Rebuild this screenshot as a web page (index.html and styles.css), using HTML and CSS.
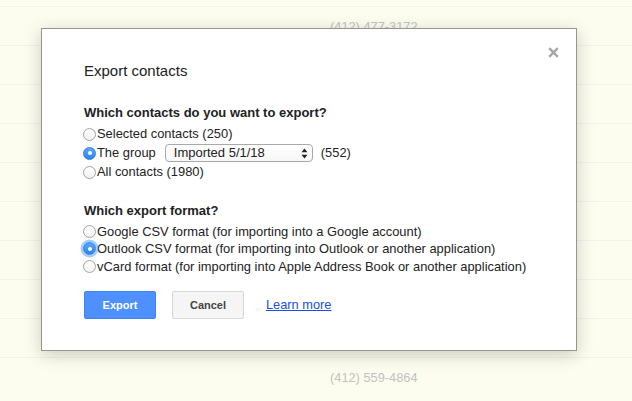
FILE: index.html
```html
<!DOCTYPE html>
<html>
<head>
<meta charset="utf-8">
<link rel="stylesheet" href="styles.css">
</head>
<body>
<div class="list">
  <div class="row"><span class="phone">(412) 477-3172</span></div>
  <div class="row"></div>
  <div class="row"></div>
  <div class="row"></div>
  <div class="row"></div>
  <div class="row"></div>
  <div class="row"></div>
  <div class="row"></div>
  <div class="row"></div>
  <div class="row"><span class="phone">(412) 559-4864</span></div>
</div>

<div class="dialog">
  <svg class="close" width="11" height="11" viewBox="0 0 11 11"><path d="M1.2 1.2L9.8 9.8M9.8 1.2L1.2 9.8" stroke="#a6a6a6" stroke-width="2.4" fill="none"/></svg>
  <div class="title">Export contacts</div>

  <div class="heading first">Which contacts do you want to export?</div>
  <div class="options wide">
    <label class="opt"><span class="radio"></span>Selected contacts (250)</label>
    <label class="opt"><span class="radio on"></span>The group
      <span class="select"><span class="select-text">Imported 5/1/18</span>
        <svg class="arrows" width="7" height="11" viewBox="0 0 7 11"><path d="M3.5 0.5L6.5 4.3H0.5Z M3.5 10.5L6.5 6.7H0.5Z" fill="#222"/></svg>
      </span>
      <span class="count">(552)</span>
    </label>
    <label class="opt"><span class="radio"></span>All contacts (1980)</label>
  </div>

  <div class="heading second">Which export format?</div>
  <div class="options">
    <label class="opt"><span class="radio"></span>Google CSV format (for importing into a Google account)</label>
    <label class="opt"><span class="radio on focus"></span>Outlook CSV format (for importing into Outlook or another application)</label>
    <label class="opt"><span class="radio"></span>vCard format (for importing into Apple Address Book or another application)</label>
  </div>

  <div class="actions">
    <button class="btn primary">Export</button>
    <button class="btn">Cancel</button>
    <a class="link" href="#">Learn more</a>
  </div>
</div>
</body>
</html>
```

FILE: styles.css
```css
html, body {
  margin: 0;
  padding: 0;
}
body {
  background: #fdfdef;
  font-family: "Liberation Sans", Arial, sans-serif;
  width: 632px;
  height: 401px;
  overflow: hidden;
  position: relative;
}
.list {
  padding-top: 6px;
}
.row {
  height: 38px;
  border-top: 1px solid #f2f2ec;
  display: flex;
  align-items: center;
  padding-left: 330px;
}
.phone {
  font-size: 12.8px;
  color: #c2c2c0;
}
.dialog {
  position: absolute;
  left: 41px;
  top: 28px;
  width: 492px;
  height: 288px;
  padding: 33px 0 0 42px;
  background: #fff;
  border: 1px solid #96968f;
  box-shadow: 0 4px 16px rgba(0,0,0,0.2);
  color: #222;
}
.close {
  position: absolute;
  left: 506px;
  top: 18px;
}
.title {
  font-size: 15px;
  line-height: 18px;
}
.heading {
  font-size: 13px;
  font-weight: bold;
  line-height: 18px;
}
.heading.first {
  margin-top: 24px;
}
.heading.second {
  margin-top: 21px;
}
.options {
  margin-top: 3px;
  display: flex;
  flex-direction: column;
}
.options.wide {
  gap: 1px;
}
.opt {
  display: flex;
  align-items: center;
  font-size: 12.9px;
  line-height: 17px;
  height: 17.3px;
}
.options.wide .opt {
  line-height: 18px;
  height: 18px;
}
.radio {
  box-sizing: border-box;
  width: 13px;
  height: 13px;
  margin: 0 1px 0 -1px;
  border-radius: 50%;
  border: 1px solid #a3a3a3;
  background: linear-gradient(#ffffff, #f2f2f2);
  position: relative;
  flex: none;
}
.radio.on {
  border-color: #2a7ee8;
  background: linear-gradient(#5aa9fb, #2b82f2);
}
.radio.on::after {
  content: "";
  position: absolute;
  left: 3.5px;
  top: 3.5px;
  width: 4px;
  height: 4px;
  border-radius: 50%;
  background: #fff;
}
.radio.focus {
  box-shadow: 0 0 0 2.5px rgba(90,160,245,0.55);
}
.select {
  box-sizing: border-box;
  margin-left: 9px;
  width: 148px;
  height: 18px;
  border: 1px solid #a9a9a9;
  border-radius: 4px;
  background: linear-gradient(#ffffff, #f7f7f7);
  display: flex;
  align-items: center;
  justify-content: space-between;
  padding: 0 4px 0 8px;
}
.select-text {
  font-size: 13px;
  line-height: 16px;
}
.count {
  margin-left: 8px;
}
.actions {
  margin-top: 16px;
  display: flex;
  align-items: center;
}
.btn {
  box-sizing: border-box;
  width: 72px;
  height: 28px;
  border-radius: 2px;
  border: 1px solid #d8d8d8;
  background: #f5f5f5;
  color: #444;
  font-family: "Liberation Sans", Arial, sans-serif;
  font-weight: bold;
  font-size: 11px;
  padding: 0;
  margin-right: 16px;
}
.btn.primary {
  background: #4d90fe;
  border-color: #3f84f4;
  color: #fff;
}
.link {
  margin-left: 6px;
  font-size: 12.8px;
  color: #1a4fe0;
  text-decoration: underline;
}
```
